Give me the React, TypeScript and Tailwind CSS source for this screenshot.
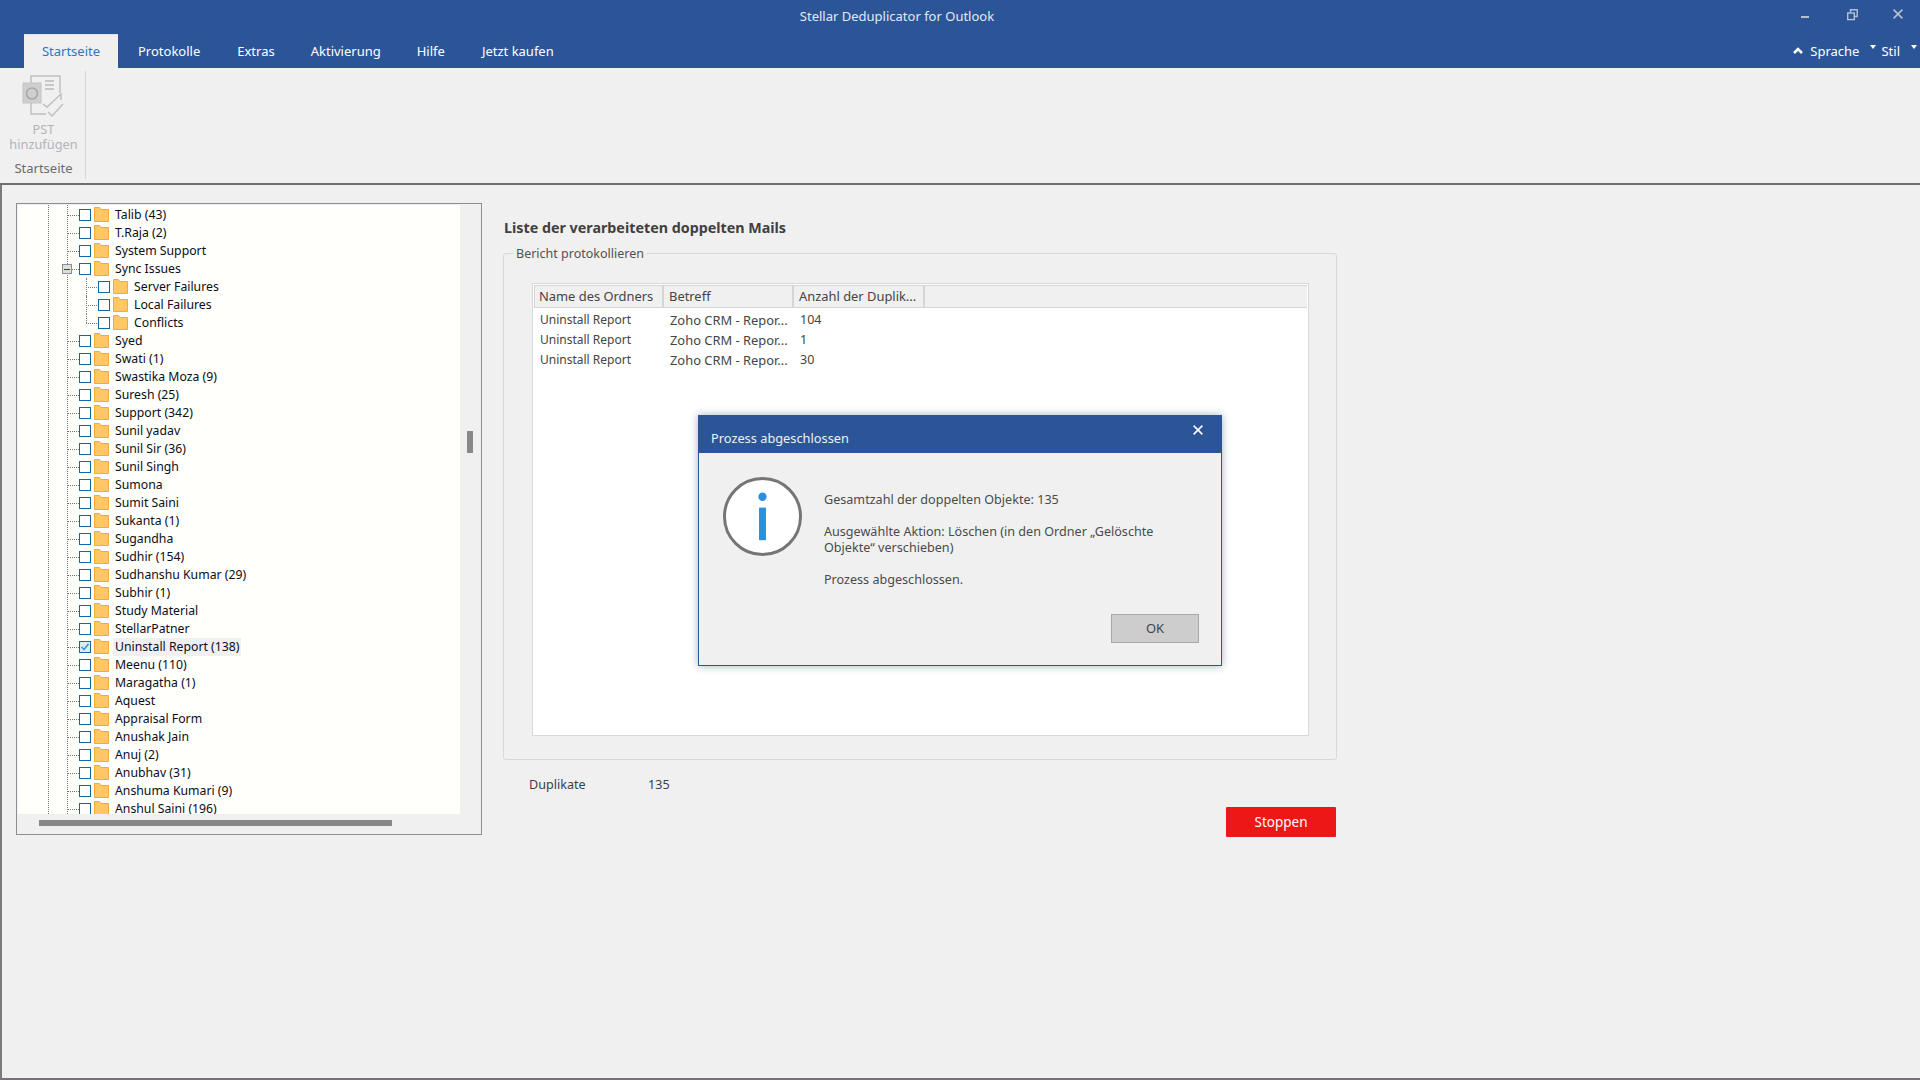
const rows: [string, number, boolean?][] = [
  ["Talib (43)", 0], ["T.Raja (2)", 0], ["System Support", 0], ["Sync Issues", 0],
  ["Server Failures", 1], ["Local Failures", 1], ["Conflicts", 1],
  ["Syed", 0], ["Swati (1)", 0], ["Swastika Moza (9)", 0], ["Suresh (25)", 0], ["Support (342)", 0],
  ["Sunil yadav", 0], ["Sunil Sir (36)", 0], ["Sunil Singh", 0], ["Sumona", 0], ["Sumit Saini", 0],
  ["Sukanta (1)", 0], ["Sugandha", 0], ["Sudhir (154)", 0], ["Sudhanshu Kumar (29)", 0], ["Subhir (1)", 0],
  ["Study Material", 0], ["StellarPatner", 0], ["Uninstall Report (138)", 0, true], ["Meenu (110)", 0],
  ["Maragatha (1)", 0], ["Aquest", 0], ["Appraisal Form", 0], ["Anushak Jain", 0], ["Anuj (2)", 0],
  ["Anubhav (31)", 0], ["Anshuma Kumari (9)", 0], ["Anshul Saini (196)", 0],
];

function Folder() {
  return (
    <svg width="15" height="15" viewBox="0 0 15 15" className="shrink-0 mb-[2px]">
      <path d="M0.5 14.5V0.5H5.5L7 2.5H14.5V14.5Z" fill="#ffc766" stroke="#f5a93d" />
    </svg>
  );
}

function Box({ checked }: { checked?: boolean }) {
  return (
    <span className={`w-[12px] h-[12px] shrink-0 border border-[#1368a3] flex items-center justify-center ${checked ? "bg-[#d8ebf8]" : "bg-white"}`}>
      {checked && (
        <svg width="10" height="10" viewBox="0 0 10 10">
          <path d="M1.5 5L4 7.5L8.5 2" fill="none" stroke="#2b8fd0" strokeWidth="1.4" />
        </svg>
      )}
    </span>
  );
}

function Row({ label, level, selected }: { label: string; level: number; selected?: boolean }) {
  const isSync = label === "Sync Issues";
  const lastChild = label === "Conflicts";
  return (
    <div className="h-[18px] flex items-center relative shrink-0">
      {level === 0 && <span className="absolute left-[49px] w-[12px] top-[9px] border-t border-dotted border-[#777]" />}
      {level === 1 && (
        <>
          <span className={`absolute left-[68px] w-0 top-0 border-l border-dotted border-[#777] ${lastChild ? "h-[9px]" : "h-[18px]"}`} />
          <span className="absolute left-[68px] w-[11px] top-[9px] border-t border-dotted border-[#777]" />
        </>
      )}
      {isSync && (
        <span className="absolute left-[44px] top-[4px] w-[10px] h-[10px] bg-[#dcdde2] border border-[#8e8e96] flex items-center justify-center">
          <span className="w-[6px] h-[1px] bg-[#333a7a]" />
        </span>
      )}
      <div className={`flex items-center ${level === 1 ? "ml-[80px]" : "ml-[61px]"}`}>
        <Box checked={selected} />
        <span className="w-[3px]" />
        <Folder />
        <span className={`ml-[4px] px-[2px] h-[18px] leading-[18px] whitespace-nowrap text-[12.25px] text-[#0c0c20] ${selected ? "bg-[#f0f0f0]" : ""}`}>
          {label}
        </span>
      </div>
    </div>
  );
}

function Tab({ label, active, cls }: { label: string; active?: boolean; cls: string }) {
  return (
    <div className={`h-[34px] flex items-center text-[13px] pt-[1px] ${active ? "bg-[#f0f0f0] text-[#2a78c4] justify-center w-[94px] border-t border-[#dfe4ec]" : "text-white"} ${cls}`}>
      {label}
    </div>
  );
}

function OutlookIcon() {
  return (
    <svg width="42" height="42" viewBox="0 0 42 42" fill="none">
      <path d="M9 8V1H38V18M9 28V39H24" stroke="#bdbdbd" strokeWidth="1.4" />
      <path d="M23 6H32M23 10H32M23 14H32" stroke="#b9b9b9" strokeWidth="1.4" />
      <path d="M21 29L25 32L39 19V25" stroke="#bdbdbd" strokeWidth="1.4" />
      <rect x="1" y="8" width="18" height="20" fill="#cfcfcf" stroke="#c4c4c4" />
      <ellipse cx="10" cy="18.5" rx="5.5" ry="5.5" fill="none" stroke="#a9a9a9" strokeWidth="1.6" />
      <path d="M26 37L30 41L41 29" stroke="#c2c2c2" strokeWidth="1.5" />
    </svg>
  );
}

export default function App() {
  return (
    <div className="w-[1920px] h-[1080px] overflow-hidden relative bg-[#f0f0f0] flex flex-col font-['Noto_Sans','Liberation_Sans',sans-serif]">
      {/* title + tabs */}
      <header className="h-[68px] shrink-0 bg-[#2b5597] flex flex-col">
        <div className="h-[34px] flex items-center relative">
          <div className="w-full text-center text-[13px] text-[#e4e9f2] mr-[126px]">Stellar Deduplicator for Outlook</div>
          <div className="absolute right-[17px] top-[9px] flex items-start text-[#b6c0d2]">
            <svg width="10" height="12" viewBox="0 0 10 12" className="mr-[37px]"><rect x="1" y="7" width="8" height="2" fill="currentColor" /></svg>
            <svg width="11" height="12" viewBox="0 0 11 12" className="mr-[35px]" fill="none" stroke="currentColor" strokeWidth="1.4"><rect x="0.7" y="4" width="6.6" height="6.6" /><path d="M3.5 3.5V0.8H10.2V7.5H8" /></svg>
            <svg width="10" height="10" viewBox="0 0 10 10" fill="none" stroke="currentColor" strokeWidth="1.6"><path d="M0.6 0.6L9.4 9.4M9.4 0.6L0.6 9.4" /></svg>
          </div>
        </div>
        <div className="h-[34px] flex items-end pl-[24px] relative">
          <Tab label="Startseite" active cls="" />
          <Tab label="Protokolle" cls="ml-[20px]" />
          <Tab label="Extras" cls="ml-[37px]" />
          <Tab label="Aktivierung" cls="ml-[36px]" />
          <Tab label="Hilfe" cls="ml-[36px]" />
          <Tab label="Jetzt kaufen" cls="ml-[37px]" />
          <div className="absolute right-[3px] top-0 h-[34px] flex items-center text-white text-[13px] pt-[2px]">
            <svg width="10" height="7" viewBox="0 0 10 7" className="mr-[7px] mb-[4px]" fill="none" stroke="white" strokeWidth="2.6"><path d="M1 6L5 2L9 6" /></svg>
            <span>Sprache</span>
            <svg width="6" height="4" viewBox="0 0 6 4" className="ml-[11px] mr-[5px] mb-[10px]"><path d="M0 0H6L3 4Z" fill="white" /></svg>
            <span>Stil</span>
            <svg width="6" height="4" viewBox="0 0 6 4" className="ml-[11px] mb-[10px]"><path d="M0 0H6L3 4Z" fill="white" /></svg>
          </div>
        </div>
      </header>

      {/* ribbon */}
      <div className="h-[117px] shrink-0 flex border-b-2 border-[#6f6f6f] pt-[3px] pl-[2px]">
        <div className="w-[84px] h-[108px] border-r border-[#d6d6d6] flex flex-col items-center">
          <div className="mt-[4px] mr-[1px]"><OutlookIcon /></div>
          <div className="mt-[5px] text-[12.8px] leading-[15px] text-[#b4b4b4] text-center">PST<br />hinzufügen</div>
          <div className="mt-[9px] text-[13px] leading-[15px] text-[#6c6c6c]">Startseite</div>
        </div>
      </div>

      {/* main */}
      <main className="flex-1 flex border-l-2 border-[#7a7a7a] border-b-2 border-b-[#7a6e7a] pl-[14px] pt-[18px]">
        <div className="w-[466px] h-[632px] border border-[#8a8f94] bg-[#f0f0f0] relative shrink-0 flex flex-col pl-[1px] pt-[1px]">
          <div className="w-[442px] h-[609px] pt-[1px] bg-[#fffffb] overflow-hidden relative flex flex-col">
            <span className="absolute left-[30px] top-0 h-full border-l border-dotted border-[#777]" />
            <span className="absolute left-[49px] top-0 h-full border-l border-dotted border-[#777]" />
            {rows.map((r) => (
              <Row key={r[0]} label={r[0]} level={r[1]} selected={r[2]} />
            ))}
          </div>
          <div className="ml-[21px] mt-[6px] w-[353px] h-[6px] bg-[#888]" />
          <div className="absolute left-[450px] top-[227px] w-[6px] h-[22px] bg-[#888]" />
        </div>

        <section className="ml-[21px] w-[834px] flex flex-col">
          <h1 className="mt-[15px] ml-[1px] text-[14.3px] leading-[20px] font-bold text-[#404040] whitespace-nowrap">Liste der verarbeiteten doppelten Mails</h1>
          <div className="mt-[15px] h-[507px] border border-[#d8d8d8] rounded-[3px] relative pl-[28px] pr-[27px] pt-[29px] pb-[23px]">
            <span className="absolute left-[9px] -top-[9px] px-[3px] bg-[#f0f0f0] text-[12.5px] leading-[18px] text-[#505050]">Bericht protokollieren</span>
            <div className="h-[453px] bg-white border border-[#d8d8d8] p-[1px] text-[12.9px] text-[#444]">
              <div className="h-[23px] bg-[#f0f0f0] border-b border-t border-[#d5d5d5] flex">
                <div className="w-[130px] border-r-2 border-l border-[#d5d5d5] pl-[4px] leading-[21px] whitespace-nowrap">Name des Ordners</div>
                <div className="w-[130px] border-r-2 border-[#d5d5d5] pl-[5px] leading-[21px]">Betreff</div>
                <div className="w-[131px] border-r-2 border-[#d5d5d5] pl-[5px] leading-[21px] whitespace-nowrap">Anzahl der Duplik...</div>
              </div>
              <div className="pt-[2px] flex flex-col">
                {["104", "1", "30"].map((n) => (
                  <div key={n} className="h-[20px] flex items-center leading-[20px]">
                    <span className="w-[130px] pl-[6px] text-[12px]">Uninstall Report</span>
                    <span className="w-[130px] pl-[6px] whitespace-nowrap">Zoho CRM - Repor...</span>
                    <span className="pl-[6px] text-[12.5px]">{n}</span>
                  </div>
                ))}
              </div>
            </div>
          </div>
          <div className="mt-[15px] pl-[26px] h-[20px] flex items-center text-[12.6px] text-[#404040]">
            <span className="w-[119px]">Duplikate</span>
            <span>135</span>
          </div>
          <div className="mt-[12px] flex justify-end pr-[1px]">
            <button className="w-[110px] h-[30px] bg-[#ee1717] text-white text-[13.5px] rounded-[1px]">Stoppen</button>
          </div>
        </section>
      </main>

      {/* dialog */}
      <div className="absolute left-[698px] top-[415px] w-[524px] h-[251px] bg-[#f0f0f0] border border-[#2b5597] shadow-[0_0_8px_rgba(60,80,120,0.45)] flex flex-col">
        <div className="h-[37px] shrink-0 bg-[#2b5597] flex items-start justify-between pl-[12px] pr-[18px] text-white">
          <span className="text-[12.8px] mt-[13px] leading-[18px] text-[#eef1f6]">Prozess abgeschlossen</span>
          <svg width="10" height="10" viewBox="0 0 10 10" className="mt-[9px]" fill="none" stroke="white" strokeWidth="1.6"><path d="M0.6 0.6L9.4 9.4M9.4 0.6L0.6 9.4" /></svg>
        </div>
        <div className="flex pl-[24px] pt-[24px]">
          <svg width="79" height="79" viewBox="0 0 80 80" className="shrink-0">
            <circle cx="40" cy="40" r="38.5" fill="white" stroke="#757575" strokeWidth="3" />
            <circle cx="40" cy="20" r="4.2" fill="#2b8fe0" />
            <rect x="36.5" y="31" width="7" height="33" fill="#2b8fe0" />
          </svg>
          <div className="ml-[22px] mt-[15px] w-[350px] text-[12.6px] leading-[16px] text-[#4a4a4a]">
            <p>Gesamtzahl der doppelten Objekte: 135</p>
            <p className="mt-[16px]">Ausgewählte Aktion: Löschen (in den Ordner „Gelöschte Objekte“ verschieben)</p>
            <p className="mt-[16px]">Prozess abgeschlossen.</p>
          </div>
        </div>
        <div className="flex justify-end pr-[22px] mt-[auto] mb-[22px]">
          <button className="w-[88px] h-[29px] bg-[#cdcdcd] border border-[#a8a8a8] text-[13px] text-[#444]">OK</button>
        </div>
      </div>
    </div>
  );
}
